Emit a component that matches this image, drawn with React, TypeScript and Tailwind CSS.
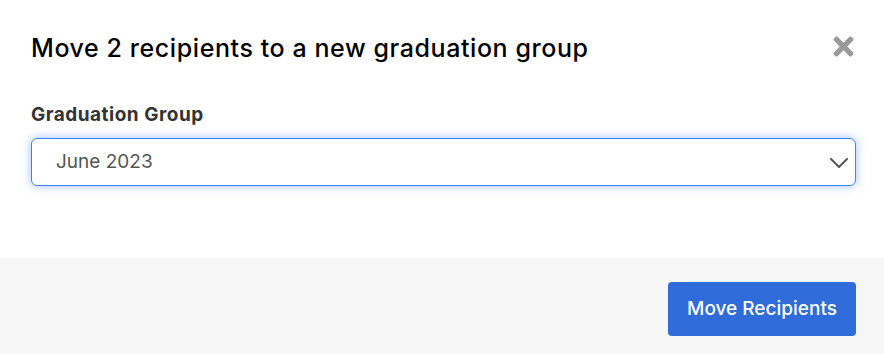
import { FaTimes } from 'react-icons/fa'

export default function App() {
  return (
    <div className="w-[884px] h-[354px] bg-white flex flex-col font-['Inter',sans-serif] overflow-hidden">
      <div className="flex-1 flex flex-col pl-[31px] pr-[28px]">
        <div className="flex items-start justify-between pt-[32px]">
          <h2 className="text-[25px] leading-[32px] font-medium text-black tracking-[0.58px]">
            Move 2 recipients to a new graduation group
          </h2>
          <button className="mt-0 mr-[-2px] text-[#9a9a9a]">
            <FaTimes className="w-[29px] h-[29px]" />
          </button>
        </div>
        <label className="mt-[40px] text-[19px] leading-[22px] font-bold text-[#333] tracking-[0.5px]">
          Graduation Group
        </label>
        <div className="mt-[12px] h-[48px] flex items-center justify-between rounded-[6px] border border-[#3b82f6] shadow-[0_0_10px_rgba(59,130,246,0.5)] pl-[24px] pr-[6px]">
          <span className="text-[19px] text-[#555]">June 2023</span>
          <svg width="18" height="10" viewBox="0 0 18 10" fill="none" className="mr-[1px] mt-[2px]">
            <path d="M1 1l8 8 8-8" stroke="#555" strokeWidth="2" strokeLinecap="round" strokeLinejoin="round" />
          </svg>
        </div>
      </div>
      <div className="h-[96px] bg-[#f6f6f6] flex justify-end items-start pt-[24px] pr-[28px]">
        <button className="h-[54px] w-[188px] rounded-[4px] bg-[#2f6cd9] text-white text-[19px] font-medium">
          Move Recipients
        </button>
      </div>
    </div>
  )
}
